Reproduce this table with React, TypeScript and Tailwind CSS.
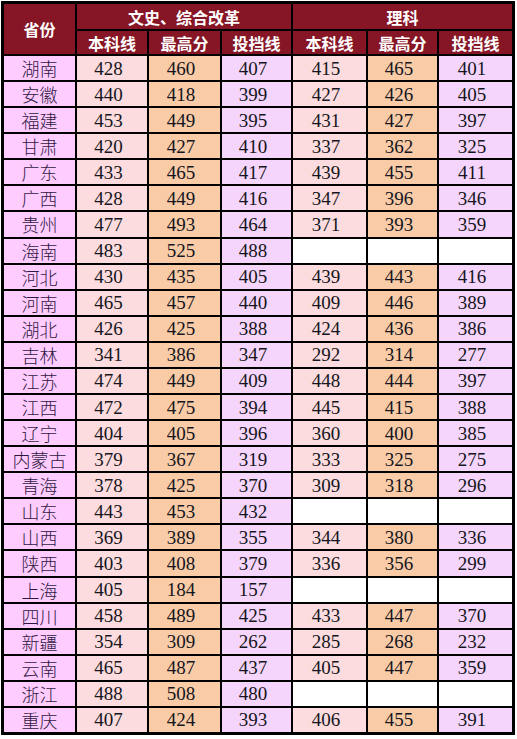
import React from "react";

type Row = [string, string, string, string, string, string, string];

const rows: Row[] = [
  ["湖南", "428", "460", "407", "415", "465", "401"],
  ["安徽", "440", "418", "399", "427", "426", "405"],
  ["福建", "453", "449", "395", "431", "427", "397"],
  ["甘肃", "420", "427", "410", "337", "362", "325"],
  ["广东", "433", "465", "417", "439", "455", "411"],
  ["广西", "428", "449", "416", "347", "396", "346"],
  ["贵州", "477", "493", "464", "371", "393", "359"],
  ["海南", "483", "525", "488", "", "", ""],
  ["河北", "430", "435", "405", "439", "443", "416"],
  ["河南", "465", "457", "440", "409", "446", "389"],
  ["湖北", "426", "425", "388", "424", "436", "386"],
  ["吉林", "341", "386", "347", "292", "314", "277"],
  ["江苏", "474", "449", "409", "448", "444", "397"],
  ["江西", "472", "475", "394", "445", "415", "388"],
  ["辽宁", "404", "405", "396", "360", "400", "385"],
  ["内蒙古", "379", "367", "319", "333", "325", "275"],
  ["青海", "378", "425", "370", "309", "318", "296"],
  ["山东", "443", "453", "432", "", "", ""],
  ["山西", "369", "389", "355", "344", "380", "336"],
  ["陕西", "403", "408", "379", "336", "356", "299"],
  ["上海", "405", "184", "157", "", "", ""],
  ["四川", "458", "489", "425", "433", "447", "370"],
  ["新疆", "354", "309", "262", "285", "268", "232"],
  ["云南", "465", "487", "437", "405", "447", "359"],
  ["浙江", "488", "508", "480", "", "", ""],
  ["重庆", "407", "424", "393", "406", "455", "391"],
];

const numBg = ["bg-[#fcdcde]", "bg-[#f9cba7]", "bg-[#f5d5fc]"];

const head =
  "bg-[#861626] text-white font-bold text-[16px] flex items-center justify-center leading-none [font-family:'Noto_Sans_CJK_SC',sans-serif]";

export default function App() {
  return (
    <div className="w-[517px] h-[739px] bg-white pt-[1px] pl-[1px]">
      <div className="w-[514px] h-[734px] bg-black p-[3px] grid gap-[2px] grid-cols-[71px_70px_71px_69px_73px_69px_73px] grid-rows-[25px_23px_repeat(26,minmax(0,1fr))]">
        <div className={`${head} row-span-2`}>省份</div>
        <div className={`${head} col-span-3`}>文史、综合改革</div>
        <div className={`${head} col-span-3`}>理科</div>
        <div className={head}>本科线</div>
        <div className={head}>最高分</div>
        <div className={head}>投挡线</div>
        <div className={head}>本科线</div>
        <div className={head}>最高分</div>
        <div className={head}>投挡线</div>
        {rows.map((r) => (
          <React.Fragment key={r[0]}>
            <div className="bg-[#ffccff] flex items-center justify-center text-[18px] leading-none text-[#2e1840] font-light [font-family:'Noto_Sans_CJK_SC',sans-serif]">
              {r[0]}
            </div>
            {r.slice(1).map((v, i) => (
              <div
                key={i}
                className={`${v === "" ? "bg-white" : numBg[i % 3]} flex items-center justify-center pr-[7px] text-[19px] leading-none text-[#151520] [font-family:'Liberation_Serif',serif]`}
              >
                {v}
              </div>
            ))}
          </React.Fragment>
        ))}
      </div>
    </div>
  );
}
